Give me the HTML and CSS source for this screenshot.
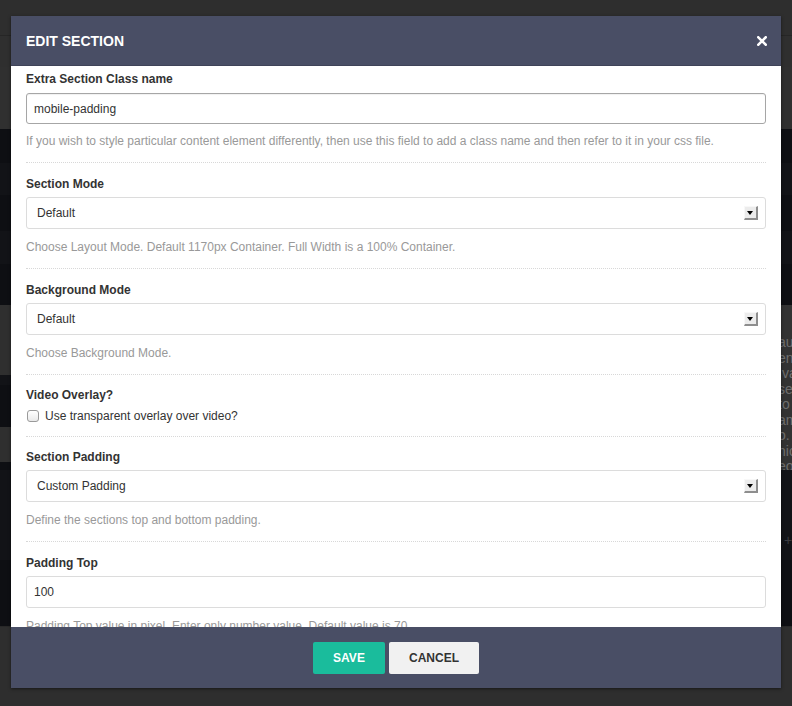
FILE: index.html
```html
<!DOCTYPE html>
<html>
<head>
<meta charset="utf-8">
<title>Edit Section</title>
<link rel="stylesheet" href="styles.css">
</head>
<body>
<div class="backdrop">
  <div class="band b-top"></div>
  <div class="band b-gray1"></div>
  <div class="band b-gray2"></div>
  <div class="band b-dark h34"></div>
  <div class="band b-dark2 h32"></div>
  <div class="band b-dark h36"></div>
  <div class="band b-dark2 h33"></div>
  <div class="band b-dark h41"></div>
  <div class="band b-text">
    <p class="bg-text">aue<br>en<br>&nbsp;va<br>se<br>to<br>am<br>o.<br>hic<br>eo</p>
  </div>
  <div class="band b-dark3"></div>
  <div class="band b-dark2 b-plus"><span class="bg-plus">+</span></div>
  <div class="band b-dark4"></div>
  <div class="band b-gray3"></div>
</div>

<div class="modal">
  <div class="modal-header">
    <h1 class="modal-title">EDIT SECTION</h1>
    <span class="close">
      <svg width="10" height="10" viewBox="0 0 10 10"><path d="M1.3 1.3 L8.7 8.7 M8.7 1.3 L1.3 8.7" stroke="#fff" stroke-width="2.6" stroke-linecap="square" fill="none"/></svg>
    </span>
  </div>
  <div class="modal-body">
    <div class="field field-first">
      <div class="label">Extra Section Class name</div>
      <div class="input input-focus">mobile-padding</div>
      <div class="help">If you wish to style particular content element differently, then use this field to add a class name and then refer to it in your css file.</div>
    </div>
    <div class="field">
      <div class="label">Section Mode</div>
      <div class="select"><span>Default</span><span class="arrow"></span></div>
      <div class="help">Choose Layout Mode. Default 1170px Container. Full Width is a 100% Container.</div>
    </div>
    <div class="field">
      <div class="label">Background Mode</div>
      <div class="select"><span>Default</span><span class="arrow"></span></div>
      <div class="help">Choose Background Mode.</div>
    </div>
    <div class="field field-check">
      <div class="label">Video Overlay?</div>
      <div class="check-row"><span class="checkbox"></span><span>Use transparent overlay over video?</span></div>
    </div>
    <div class="field field-tight">
      <div class="label">Section Padding</div>
      <div class="select"><span>Custom Padding</span><span class="arrow"></span></div>
      <div class="help">Define the sections top and bottom padding.</div>
    </div>
    <div class="field">
      <div class="label">Padding Top</div>
      <div class="input">100</div>
      <div class="help">Padding Top value in pixel. Enter only number value. Default value is 70.</div>
    </div>
  </div>
  <div class="modal-footer">
    <button class="btn btn-save">SAVE</button>
    <button class="btn btn-cancel">CANCEL</button>
  </div>
</div>
</body>
</html>
```

FILE: styles.css
```css
html, body {
  margin: 0;
  padding: 0;
}
body {
  width: 792px;
  height: 706px;
  overflow: hidden;
  background: #2e2e2e;
  font-family: "Liberation Sans", Arial, Helvetica, sans-serif;
  position: relative;
}

/* dimmed page behind the modal */
.backdrop {
  display: flex;
  flex-direction: column;
  height: 706px;
  overflow: hidden;
}
.band { width: 100%; flex: none; }
.b-top { height: 36px; background: #2e2e2e; border-bottom: 1px solid #262626; box-sizing: border-box; }
.b-gray1 { height: 31px; background: #2f2f2f; }
.b-gray2 { height: 62px; background: #303030; }
.b-dark { background: #0e0f13; }
.b-dark2 { background: #121317; }
.h32 { height: 32px; }
.h33 { height: 33px; }
.h34 { height: 34px; }
.h36 { height: 36px; }
.h41 { height: 41px; }
.b-text {
  height: 165px;
  background:
    linear-gradient(to bottom, #2f2f2f 0 70px, #121317 70px 80px, #0e0f13 80px 122px, #2f2f2f 122px 157px, #0e0f13 157px) left top / 11px 100% no-repeat,
    #333333;
  display: flex;
  justify-content: flex-end;
  overflow: hidden;
}
.bg-text {
  margin: 30px 0 0 0;
  width: 14px;
  font-size: 14px;
  line-height: 15.5px;
  color: #6e6e6e;
  white-space: nowrap;
}
.b-dark3 { height: 50px; background: #121317; }
.b-plus { height: 40px; display: flex; justify-content: flex-end; align-items: center; }
.bg-plus { color: #3a3b40; font-size: 14px; width: 8px; }
.b-dark4 { height: 66px; background: #0e0f13; }
.b-gray3 { height: 80px; background: #2e2e2e; border-top: 1px solid #282828; box-sizing: border-box; }

/* modal */
.modal {
  position: absolute;
  left: 11px;
  top: 16px;
  width: 770px;
  display: flex;
  flex-direction: column;
  box-shadow: 0 1px 3px rgba(0,0,0,0.5);
}
.modal-header {
  height: 50px;
  background: #494e65;
  display: flex;
  align-items: center;
  justify-content: space-between;
  padding: 0 14px 0 15px;
  border-bottom: 1px solid #3f4358;
  box-sizing: border-box;
}
.modal-title {
  margin: 0;
  color: #fff;
  font-size: 14px;
  font-weight: bold;
}
.close {
  display: flex;
  width: 10px;
  height: 10px;
  margin-top: 1px;
}

.modal-body {
  height: 561px;
  overflow: hidden;
  background: #fff;
  padding: 0 15px;
  box-sizing: border-box;
}
.field {
  padding: 13px 0 13px;
  border-bottom: 1px dotted #d8d8d8;
}
.field-first { padding-top: 5px; padding-bottom: 13px; }
.field-tight { padding-top: 12px; }
.label {
  font-size: 12px;
  font-weight: bold;
  color: #333;
  line-height: 16px;
  margin-bottom: 5px;
}
.field-first .label { margin-bottom: 6px; }
.field-check { padding-top: 12px; padding-bottom: 12px; }
.field-check .label { margin-bottom: 5px; }
.input, .select {
  height: 32px;
  box-sizing: border-box;
  border: 1px solid #dcdcdc;
  border-radius: 3px;
  font-size: 12px;
  color: #333;
  display: flex;
  align-items: center;
  padding: 0 7px;
  background: #fff;
}
.input-focus {
  border-color: #a6a6a6;
  height: 31px;
  box-shadow: inset 0 1px 1px rgba(0,0,0,0.06);
}
.select {
  justify-content: space-between;
  padding: 0 7px 0 10px;
}
.arrow {
  width: 14px;
  height: 14px;
  box-sizing: border-box;
  background: #ececec;
  border-right: 2px solid #8e8e8e;
  border-bottom: 2px solid #8e8e8e;
  border-top: 1px solid #f8f8f8;
  border-left: 1px solid #f8f8f8;
  position: relative;
}
.arrow::after {
  content: "";
  position: absolute;
  left: 2px;
  top: 4px;
  border-left: 3.5px solid transparent;
  border-right: 3.5px solid transparent;
  border-top: 4px solid #000;
}
.help {
  margin-top: 10px;
  font-size: 12px;
  line-height: 16px;
  color: #999;
  white-space: nowrap;
}
.field-first .help { margin-top: 9px; }
.check-row {
  display: flex;
  align-items: center;
  gap: 6px;
  font-size: 12px;
  color: #333;
  line-height: 16px;
  padding-left: 1px;
}
.checkbox {
  width: 12px;
  height: 12px;
  box-sizing: border-box;
  border: 1px solid #9a9a9a;
  border-radius: 3px;
  background: linear-gradient(#ffffff, #e9e9e9);
}

.modal-footer {
  height: 61px;
  background: #494e65;
  display: flex;
  justify-content: center;
  align-items: flex-start;
  gap: 4px;
  padding-top: 15px;
  box-sizing: border-box;
}
.btn {
  height: 32px;
  border: none;
  border-radius: 2px;
  font-family: "Liberation Sans", Arial, Helvetica, sans-serif;
  font-size: 12px;
  font-weight: bold;
  padding: 0;
  cursor: pointer;
}
.btn-save {
  width: 72px;
  background: #1abc9c;
  color: #fff;
}
.btn-cancel {
  width: 90px;
  background: #f1f1f1;
  color: #333;
}
```
